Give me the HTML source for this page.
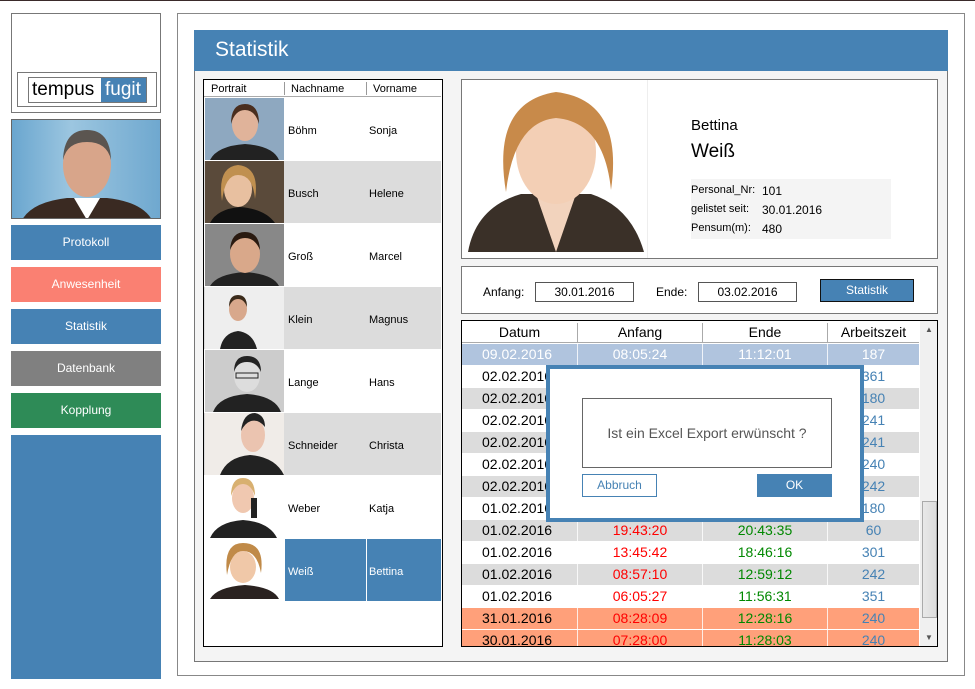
<!DOCTYPE html>
<html><head><meta charset="utf-8">
<style>
*{margin:0;padding:0;box-sizing:border-box}
body{width:975px;height:689px;background:#fff;position:relative;overflow:hidden;font-family:"Liberation Sans",sans-serif;}
.a{position:absolute}
.btn{position:absolute;left:11px;width:150px;height:35px;color:#fff;font-size:12px;text-align:center;line-height:35px}
.pl{position:absolute;left:204px;width:237px;height:62px;font-size:11px}
.pl .ph{position:absolute;left:1px;top:0;width:79px;height:62px;overflow:hidden}
.pl .n{position:absolute;left:81px;width:81px;top:0;height:62px;line-height:66px;padding-left:3px}
.pl .v{position:absolute;left:163px;width:74px;top:0;height:62px;line-height:66px;padding-left:2px}
.gr{position:absolute;left:462px;width:457px;height:21px;font-size:14px;line-height:21px}
.gr span{position:absolute;top:0;height:21px;text-align:center}
.c1{left:0;width:115px;text-align:left!important;padding-left:20px}
.c2{left:116px;width:124px;color:#f00}
.c3{left:241px;width:124px;color:#080}
.c4{left:366px;width:91px;color:#4682b4}
.lbl{position:absolute;font-size:11px}
</style></head><body>
<div class="a" style="left:0;top:0;width:975px;height:1px;background:#3a2a2a"></div>

<div class="a" style="left:11px;top:13px;width:150px;height:100px;border:1px solid #777"></div>
<div class="a" style="left:17px;top:72px;width:140px;height:35px;border:1px solid #777"></div>
<div class="a" style="left:28px;top:77px;width:119px;height:26px;border:1px solid #777;background:#fff"></div>
<div class="a" style="left:101px;top:78px;width:45px;height:24px;background:#4682b4"></div>
<div class="a" style="left:32px;top:78px;font-size:19px;line-height:24px;color:#000">tempus</div>
<div class="a" style="left:105px;top:78px;font-size:19px;line-height:24px;color:#fff">fugit</div>

<div class="a" style="left:11px;top:119px;width:150px;height:100px;border:1px solid #666;overflow:hidden;background:linear-gradient(90deg,#6aa6cf,#9cc6e0 40%,#6fa8cf)">
<svg width="150" height="100"><path d="M10 100 Q20 82 55 78 L95 78 Q130 82 140 100Z" fill="#3a2a22"/><path d="M62 78 L75 100 L88 78Z" fill="#fff"/><ellipse cx="75" cy="45" rx="24" ry="32" fill="#d8a58a"/><path d="M51 40 Q52 10 75 10 Q98 10 99 40 Q95 22 75 22 Q55 22 51 40Z" fill="#5b5550"/></svg></div>

<div class="btn" style="top:225px;background:#4682b4">Protokoll</div>
<div class="btn" style="top:267px;background:#fa8072">Anwesenheit</div>
<div class="btn" style="top:309px;background:#4682b4">Statistik</div>
<div class="btn" style="top:351px;background:#808080">Datenbank</div>
<div class="btn" style="top:393px;background:#2e8b57">Kopplung</div>
<div class="a" style="left:11px;top:435px;width:150px;height:244px;background:#4682b4"></div>

<div class="a" style="left:177px;top:13px;width:788px;height:663px;border:1px solid #888"></div>
<div class="a" style="left:194px;top:30px;width:754px;height:632px;border:1px solid #777;background:#f4f4f4"></div>
<div class="a" style="left:194px;top:30px;width:754px;height:41px;background:#4682b4"></div>
<div class="a" style="left:215px;top:38px;font-size:21px;color:#fff">Statistik</div>

<div class="a" style="left:203px;top:79px;width:240px;height:568px;border:1px solid #000;background:#fff"></div>
<div class="a" style="left:204px;top:80px;width:237px;height:17px;background:#fff;border-bottom:1px solid #aaa;font-size:11px;line-height:19px">
<span class="a" style="left:7px">Portrait</span><span class="a" style="left:80px;top:2px;height:13px;border-left:1px solid #999"></span>
<span class="a" style="left:87px">Nachname</span><span class="a" style="left:162px;top:2px;height:13px;border-left:1px solid #999"></span>
<span class="a" style="left:169px">Vorname</span></div>

<div class="pl" style="top:98px;background:#fff"><div class="ph" style="background:#8ea8c0"><svg width="79" height="62"><path d="M5 62 Q12 48 40 46 Q68 48 74 62Z" fill="#222"/><ellipse cx="40" cy="26" rx="13" ry="17" fill="#e0b39a"/><path d="M26 26 Q26 6 40 6 Q54 6 54 26 Q50 12 40 12 Q30 12 26 26Z" fill="#4a2e1e"/></svg></div><div class="n">Böhm</div><div class="v">Sonja</div></div>
<div class="pl" style="top:161px;background:#dcdcdc"><div class="ph" style="background:#5a4a3a"><svg width="79" height="62"><path d="M5 62 Q12 48 35 46 Q60 48 70 62Z" fill="#111"/><ellipse cx="33" cy="28" rx="14" ry="18" fill="#e8c0a0"/><path d="M17 40 Q12 6 33 4 Q55 6 50 38 Q48 14 33 14 Q20 14 17 40Z" fill="#c09050"/></svg></div><div class="n">Busch</div><div class="v">Helene</div></div>
<div class="pl" style="top:224px;background:#fff"><div class="ph" style="background:#888"><svg width="79" height="62"><path d="M5 62 Q12 50 40 48 Q68 50 74 62Z" fill="#222"/><ellipse cx="40" cy="30" rx="15" ry="19" fill="#d9a88a"/><path d="M25 26 Q26 8 40 8 Q54 8 55 26 Q50 14 40 14 Q30 14 25 26Z" fill="#2a1a10"/></svg></div><div class="n">Groß</div><div class="v">Marcel</div></div>
<div class="pl" style="top:287px;background:#dcdcdc"><div class="ph" style="background:#eee"><svg width="79" height="62"><path d="M15 62 Q18 46 33 44 Q48 46 52 62Z" fill="#222"/><ellipse cx="33" cy="22" rx="9" ry="12" fill="#d8a88c"/><path d="M24 20 Q24 8 33 8 Q42 8 42 20 Q39 12 33 12 Q27 12 24 20Z" fill="#3a2a1a"/></svg></div><div class="n">Klein</div><div class="v">Magnus</div></div>
<div class="pl" style="top:350px;background:#fff"><div class="ph" style="background:#ccc"><svg width="79" height="62"><path d="M8 62 Q14 46 42 44 Q70 46 76 62Z" fill="#222"/><ellipse cx="42" cy="26" rx="13" ry="16" fill="#ddd"/><path d="M29 22 Q29 6 42 6 Q56 6 56 22 Q52 12 42 12 Q32 12 29 22Z" fill="#222"/><rect x="31" y="23" width="22" height="5" fill="none" stroke="#222"/></svg></div><div class="n">Lange</div><div class="v">Hans</div></div>
<div class="pl" style="top:413px;background:#dcdcdc"><div class="ph" style="background:#f0ece8"><svg width="79" height="62"><path d="M15 62 Q22 44 45 42 Q70 44 79 62Z" fill="#222"/><ellipse cx="48" cy="22" rx="12" ry="17" fill="#ebc4b0"/><path d="M36 18 Q38 0 50 0 Q60 2 60 14 Q54 6 46 8 Q40 10 36 18Z" fill="#222"/></svg></div><div class="n">Schneider</div><div class="v">Christa</div></div>
<div class="pl" style="top:476px;background:#fff"><div class="ph" style="background:#fff"><svg width="79" height="62"><path d="M5 62 Q12 46 38 44 Q64 46 72 62Z" fill="#222"/><ellipse cx="38" cy="22" rx="11" ry="15" fill="#f0c8b0"/><path d="M26 20 Q26 2 38 2 Q50 2 50 20 Q46 8 38 8 Q30 8 26 20Z" fill="#d8b070"/><rect x="46" y="22" width="6" height="20" fill="#222"/></svg></div><div class="n">Weber</div><div class="v">Katja</div></div>
<div class="pl" style="top:539px"><div class="ph" style="background:#fff"><svg width="79" height="62"><path d="M5 60 Q12 48 40 46 Q68 48 74 60Z" fill="#2a2220"/><ellipse cx="38" cy="28" rx="13" ry="16" fill="#f0c8a8"/><path d="M22 36 Q18 4 38 4 Q60 4 56 34 Q52 12 38 12 Q26 12 22 36Z" fill="#c08a48"/></svg></div><div class="n" style="background:#4682b4;color:#fff">Weiß</div><div class="v" style="background:#4682b4;color:#fff">Bettina</div></div>

<div class="a" style="left:461px;top:79px;width:477px;height:180px;border:1px solid #777;background:#fff"></div>
<div class="a" style="left:647px;top:80px;width:1px;height:178px;background:#eee"></div>
<div class="a" style="left:466px;top:82px;width:180px;height:172px;overflow:hidden"><svg width="180" height="172"><path d="M2 170 Q10 125 55 112 L125 112 Q165 125 178 170Z" fill="#3a3028"/><path d="M70 112 L90 170 L110 112Z" fill="#f2d3bd"/><ellipse cx="90" cy="70" rx="40" ry="52" fill="#f3cfb5"/><path d="M40 110 Q25 20 90 10 Q158 18 145 108 Q138 40 90 36 Q48 40 40 110Z" fill="#c88a4a"/></svg></div>
<div class="a" style="left:691px;top:117px;font-size:15px">Bettina</div>
<div class="a" style="left:691px;top:141px;font-size:19px">Weiß</div>
<div class="a" style="left:691px;top:179px;width:200px;height:60px;background:#f4f4f4"></div>
<div class="lbl" style="left:691px;top:184px">Personal_Nr:</div><div class="lbl" style="left:762px;top:184px;font-size:12px">101</div>
<div class="lbl" style="left:691px;top:203px">gelistet seit:</div><div class="lbl" style="left:762px;top:203px;font-size:12px">30.01.2016</div>
<div class="lbl" style="left:691px;top:222px">Pensum(m):</div><div class="lbl" style="left:762px;top:222px;font-size:12px">480</div>

<div class="a" style="left:461px;top:266px;width:477px;height:48px;border:1px solid #777;background:#fff"></div>
<div class="lbl" style="left:483px;top:285px;font-size:12px">Anfang:</div>
<div class="a" style="left:535px;top:282px;width:99px;height:20px;border:1px solid #555;font-size:12px;text-align:center;line-height:18px">30.01.2016</div>
<div class="lbl" style="left:656px;top:285px;font-size:12px">Ende:</div>
<div class="a" style="left:698px;top:282px;width:99px;height:20px;border:1px solid #555;font-size:12px;text-align:center;line-height:18px">03.02.2016</div>
<div class="a" style="left:820px;top:279px;width:94px;height:23px;border:1px solid #111;background:#4682b4;color:#fff;font-size:12px;text-align:center;line-height:21px">Statistik</div>

<div class="a" style="left:461px;top:320px;width:477px;height:327px;border:1px solid #000;background:#fff;overflow:hidden">
<div class="a" style="left:458px;top:0;width:18px;height:325px;background:#f0f0f0"></div>
<div class="a" style="left:463px;top:4px;font-size:8px;color:#555">▲</div>
<div class="a" style="left:463px;top:312px;font-size:8px;color:#555">▼</div>
<div class="a" style="left:460px;top:180px;width:15px;height:117px;border:1px solid #aaa;background:linear-gradient(90deg,#e8e8e8,#dcdcdc)"></div>
</div>
<div class="a" style="left:462px;top:322px;width:457px;height:21px;background:#fff;border-bottom:1px solid #aaa;font-size:14px;line-height:21px">
<span class="a" style="left:0;width:115px;text-align:center">Datum</span><span class="a" style="left:115px;top:1px;height:19px;border-left:1px solid #aaa"></span>
<span class="a" style="left:116px;width:124px;text-align:center">Anfang</span><span class="a" style="left:240px;top:1px;height:19px;border-left:1px solid #aaa"></span>
<span class="a" style="left:241px;width:124px;text-align:center">Ende</span><span class="a" style="left:365px;top:1px;height:19px;border-left:1px solid #aaa"></span>
<span class="a" style="left:366px;width:91px;text-align:center">Arbeitszeit</span></div>

<div class="gr" style="top:344px;background:#b0c4de;color:#fff"><span class="c1">09.02.2016</span><span class="c2" style="color:#fff">08:05:24</span><span class="c3" style="color:#fff">11:12:01</span><span class="c4" style="color:#fff">187</span></div>
<div class="gr" style="top:366px;background:#fff"><span class="c1">02.02.2016</span><span class="c2">13:10:00</span><span class="c3">19:11:00</span><span class="c4">361</span></div>
<div class="gr" style="top:388px;background:#dcdcdc"><span class="c1">02.02.2016</span><span class="c2">12:00:00</span><span class="c3">15:00:00</span><span class="c4">180</span></div>
<div class="gr" style="top:410px;background:#fff"><span class="c1">02.02.2016</span><span class="c2">09:00:00</span><span class="c3">13:01:00</span><span class="c4">241</span></div>
<div class="gr" style="top:432px;background:#dcdcdc"><span class="c1">02.02.2016</span><span class="c2">08:00:00</span><span class="c3">12:01:00</span><span class="c4">241</span></div>
<div class="gr" style="top:454px;background:#fff"><span class="c1">02.02.2016</span><span class="c2">07:00:00</span><span class="c3">11:00:00</span><span class="c4">240</span></div>
<div class="gr" style="top:476px;background:#dcdcdc"><span class="c1">02.02.2016</span><span class="c2">06:00:00</span><span class="c3">10:02:00</span><span class="c4">242</span></div>
<div class="gr" style="top:498px;background:#fff"><span class="c1">01.02.2016</span><span class="c2">21:00:00</span><span class="c3">00:00:00</span><span class="c4">180</span></div>
<div class="gr" style="top:520px;background:#dcdcdc"><span class="c1">01.02.2016</span><span class="c2">19:43:20</span><span class="c3">20:43:35</span><span class="c4">60</span></div>
<div class="gr" style="top:542px;background:#fff"><span class="c1">01.02.2016</span><span class="c2">13:45:42</span><span class="c3">18:46:16</span><span class="c4">301</span></div>
<div class="gr" style="top:564px;background:#dcdcdc"><span class="c1">01.02.2016</span><span class="c2">08:57:10</span><span class="c3">12:59:12</span><span class="c4">242</span></div>
<div class="gr" style="top:586px;background:#fff"><span class="c1">01.02.2016</span><span class="c2">06:05:27</span><span class="c3">11:56:31</span><span class="c4">351</span></div>
<div class="gr" style="top:608px;background:#ffa07a"><span class="c1">31.01.2016</span><span class="c2">08:28:09</span><span class="c3">12:28:16</span><span class="c4">240</span></div>
<div class="gr" style="top:630px;height:16px;overflow:hidden;background:#ffa07a"><span class="c1">30.01.2016</span><span class="c2">07:28:00</span><span class="c3">11:28:03</span><span class="c4">240</span></div>
<div class="a" style="left:577px;top:344px;width:1px;height:302px;background:rgba(255,255,255,.8)"></div>
<div class="a" style="left:702px;top:344px;width:1px;height:302px;background:rgba(255,255,255,.8)"></div>
<div class="a" style="left:827px;top:344px;width:1px;height:302px;background:rgba(255,255,255,.8)"></div>

<div class="a" style="left:546px;top:365px;width:318px;height:157px;border:4px solid #4682b4;background:#fff"></div>
<div class="a" style="left:582px;top:398px;width:250px;height:70px;border:1px solid #666;font-size:14px;color:#555;text-align:center;line-height:68px">Ist ein Excel Export erwünscht ?</div>
<div class="a" style="left:582px;top:474px;width:75px;height:23px;border:1px solid #4682b4;font-size:12px;color:#4682b4;text-align:center;line-height:21px">Abbruch</div>
<div class="a" style="left:757px;top:474px;width:75px;height:23px;background:#4682b4;font-size:12px;color:#fff;text-align:center;line-height:23px">OK</div>
</body></html>
